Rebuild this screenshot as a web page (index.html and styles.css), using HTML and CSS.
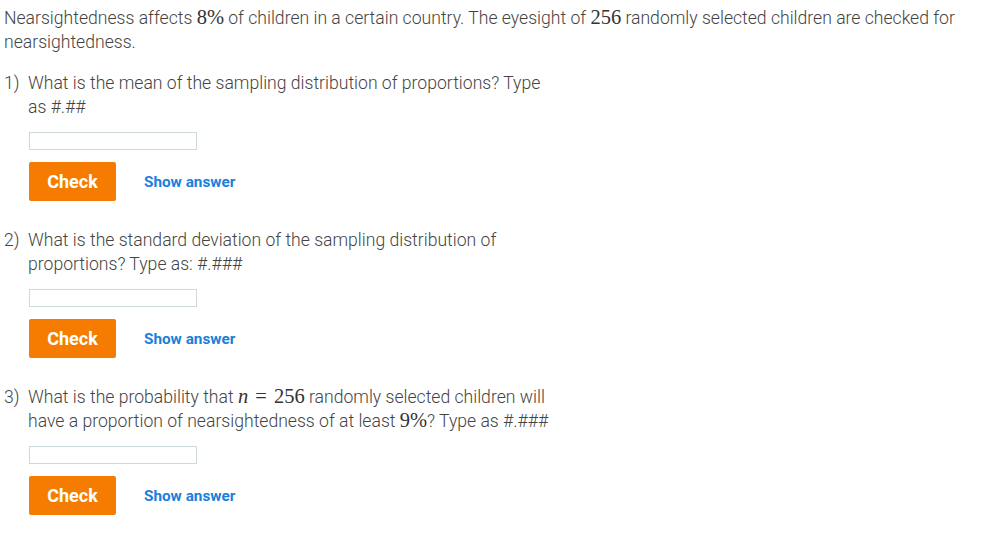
FILE: index.html
```html
<!DOCTYPE html>
<html>
<head>
<meta charset="utf-8">
<link rel="stylesheet" href="styles.css">
</head>
<body>
<div class="page">
  <p class="intro">Nearsightedness affects <span class="math">8%</span> of children in a certain country. The eyesight of <span class="math">256</span> randomly selected children are checked for nearsightedness.</p>
  <ol class="questions">
    <li class="question">
      <span class="num">1)</span>
      <div class="body">
        <p class="text">What is the mean of the sampling distribution of proportions? Type as #.##</p>
        <input class="answer" type="text">
        <div class="actions">
          <button class="check">Check</button>
          <a class="show">Show answer</a>
        </div>
      </div>
    </li>
    <li class="question">
      <span class="num">2)</span>
      <div class="body">
        <p class="text">What is the standard deviation of the sampling distribution of proportions? Type as: #.###</p>
        <input class="answer" type="text">
        <div class="actions">
          <button class="check">Check</button>
          <a class="show">Show answer</a>
        </div>
      </div>
    </li>
    <li class="question">
      <span class="num">3)</span>
      <div class="body">
        <p class="text">What is the probability that <span class="math"><i class="mi">n</i> <span class="mo">=</span> 256</span> randomly selected children will have a proportion of nearsightedness of at least <span class="math">9%</span>? Type as #.###</p>
        <input class="answer" type="text">
        <div class="actions">
          <button class="check">Check</button>
          <a class="show">Show answer</a>
        </div>
      </div>
    </li>
  </ol>
</div>
</body>
</html>
```

FILE: styles.css
```css
html, body {
  margin: 0;
  padding: 0;
  background: #ffffff;
}

body {
  font-family: Roboto, "Liberation Sans", sans-serif;
  font-weight: 300;
  font-size: 17.6px;
  line-height: 24px;
  color: #444444;
}

.page {
  padding: 6px 4px;
  width: 965px;
}

.intro {
  margin: 0;
}

.math {
  font-family: "Liberation Serif", "DejaVu Serif", serif;
  font-weight: 400;
  font-size: 20.5px;
  line-height: 0;
  color: #333333;
}

.mi {
  font-style: italic;
}

.mo {
  padding: 0 2px;
}

.questions {
  list-style: none;
  margin: 17px 0 0 0;
  padding: 0;
  display: flex;
  flex-direction: column;
  gap: 27px;
}

.question {
  display: flex;
}

.num {
  width: 24px;
  flex: none;
}

.body {
  width: 527px;
  display: flex;
  flex-direction: column;
  align-items: flex-start;
}

.text {
  margin: 0;
}

.answer {
  margin: 13px 0 0 1px;
  width: 168px;
  height: 18px;
  box-sizing: border-box;
  border: 1px solid #cfd8dc;
  border-radius: 0;
  padding: 0 4px;
  background: #ffffff;
  font: inherit;
}

.actions {
  margin: 12px 0 0 1px;
  display: flex;
  align-items: center;
  gap: 28px;
}

.check {
  width: 87px;
  height: 39px;
  border: none;
  border-radius: 2px;
  background: #f57c00;
  color: #ffffff;
  font-family: Roboto, "Liberation Sans", sans-serif;
  font-weight: 700;
  font-size: 18px;
  padding: 0;
  cursor: pointer;
}

.show {
  color: #1a80d9;
  font-weight: 700;
  font-size: 15.3px;
  cursor: pointer;
}
```
